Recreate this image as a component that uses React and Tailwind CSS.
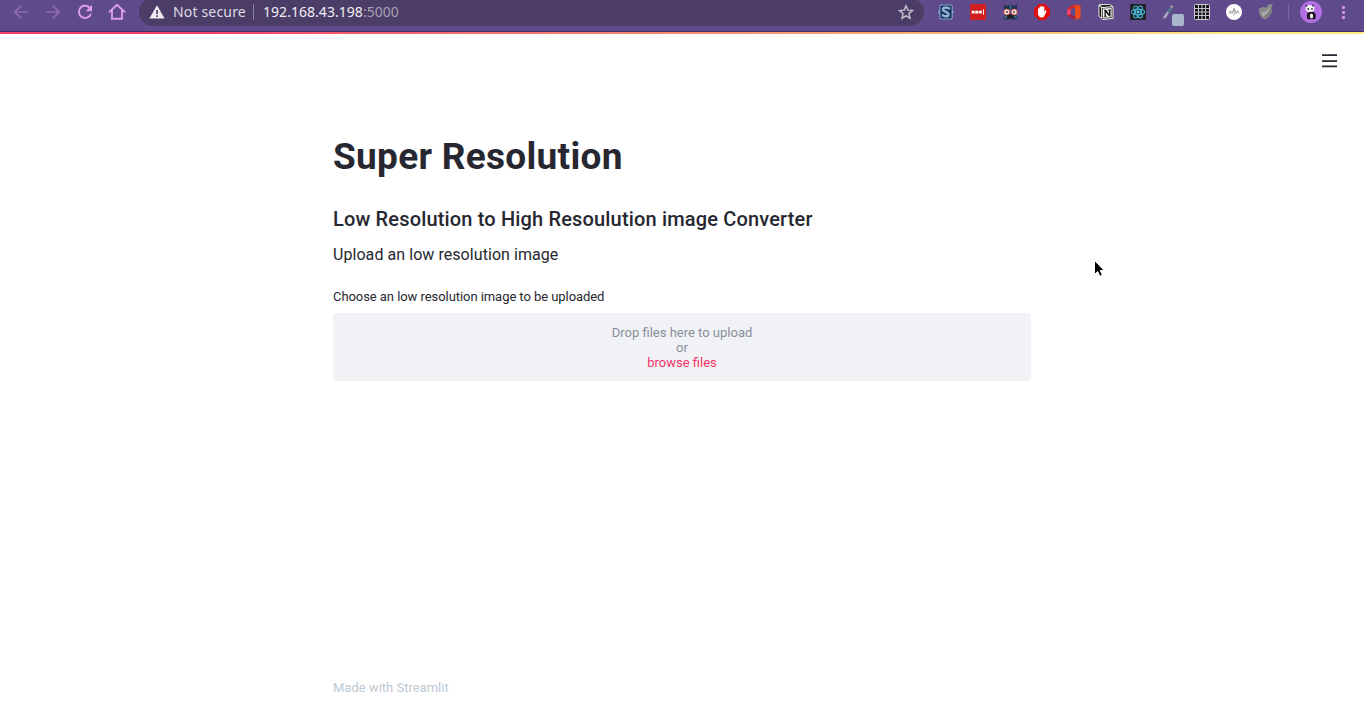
import React from "react";

function Slot({ children }) {
  return <div className="flex h-6 w-8 shrink-0 items-center justify-center">{children}</div>;
}

function Nav() {
  return (
    <>
      <Slot>
        <svg width="16" height="16" viewBox="0 0 16 16" fill="none" stroke="#936bb3" strokeWidth="1.7">
          <path d="M15 8H2M8.2 1.6 1.8 8l6.400 6.400" />
        </svg>
      </Slot>
      <Slot>
        <svg width="16" height="16" viewBox="0 0 16 16" fill="none" stroke="#936bb3" strokeWidth="1.7">
          <path d="M1 8h13M7.800 1.600 14.200 8l-6.400 6.400" />
        </svg>
      </Slot>
      <Slot>
        <svg width="16" height="16" viewBox="0 0 16 16" fill="none">
          <path d="M13.300 4.400A6.200 6.200 0 1 0 14 9.800" stroke="#dc9cf0" strokeWidth="2" />
          <path d="M15 .8v6.400H8.600z" fill="#dc9cf0" />
        </svg>
      </Slot>
      <Slot>
        <svg width="18" height="18" viewBox="0 0 18 18" fill="none" stroke="#dc9cf0" strokeWidth="1.900">
          <path d="M1 9.200 9 1.700l8 7.500M4 7v8.800h10V7" />
        </svg>
      </Slot>
    </>
  );
}

function AddressBar() {
  return (
    <div className="-mt-0.5 ml-1.5 flex h-7 w-[785px] shrink-0 items-center rounded-full bg-[#4c3d68] pl-2.5 pr-2.5 font-['Noto_Sans',sans-serif] text-[14px] leading-7 text-[#efedf2]">
      <svg width="16" height="14" viewBox="0 0 16 14">
        <path d="M8 .3 15.600 13.500H.4z" fill="#eeecef" />
        <path d="M7.200 5h1.700v4H7.200zM7.200 10.200h1.700v1.700H7.200z" fill="#4c3d68" />
      </svg>
      <span className="ml-2 w-[74px] whitespace-nowrap tracking-[0.17px] text-[#dfdbe4]">Not secure</span>
      <span className="ml-1.5 h-4 w-px bg-[#8d829e]" />
      <span className="ml-[9px] whitespace-nowrap tracking-[0.04px]">
        192.168.43.198<span className="text-[#a79fb4]">:5000</span>
      </span>
      <svg className="ml-auto" width="16" height="16" viewBox="0 0 16 16" fill="none" stroke="#c6c0cd" strokeWidth="1.400">
        <path d="m8 1.800 1.800 4.300 4.700.4-3.600 3.100 1.100 4.600L8 11.800l-4 2.400 1.100-4.600L1.500 6.500l4.700-.4z" />
      </svg>
    </div>
  );
}

function Extensions() {
  return (
    <div className="ml-1.5 flex shrink-0">
      <Slot>
        <svg width="16" height="16" viewBox="0 0 16 16">
          <path d="M2.500.5h11l1.200 1v4.700L16 8l-1.300 1.800v4.700l-1.200 1h-11l-1.200-1V9.800L0 8l1.300-1.800V1.500z" fill="#7fa3cc" />
          <path d="M3 1.500h10l.6.8V14l-.6.600H3l-.6-.6V2.300z" fill="#17345c" />
          <path d="M11 5.500V4.300q-3-1.500-5-.5-1.900 1.400-.3 2.900L9.800 9q1.500 1.600-.2 3-2 .8-4.600-.5v-1.200" fill="none" stroke="#92b1d6" strokeWidth="2.500" />
        </svg>
      </Slot>
      <Slot>
        <svg width="16" height="16" viewBox="0 0 16 16">
          <rect width="16" height="16" rx="1" fill="#d1211f" />
          <path d="M1.700 6.800h2.900v2.600H1.700zM5.300 6.800h2.900v2.600H5.300zM8.900 6.800h2.900v2.600H8.900z" fill="#fff" />
          <path d="M13.500 5.300v5.400" stroke="#fff" strokeWidth=".9" />
        </svg>
      </Slot>
      <Slot>
        <svg width="17" height="16" viewBox="0 0 17 16">
          <path d="M2.200 6 1.800.4 4.800 2Q8.500-.4 12.200 2l3-1.600-.4 6.100z" fill="#1c3550" />
          <path d="M8.500 1v5" stroke="#3d7792" strokeWidth="1.500" />
          <path d="M1 15.500Q1 12 4 11h9q3 1 3 4.500z" fill="#23354a" />
          <path d="M2 14.800Q2.500 12.500 5 12.500M15 14.800q-.5-2.300-3-2.300" stroke="#4b91b0" fill="none" />
          <path d="M5.500 10h6v4h-6z" fill="#201d27" />
          <circle cx="4.800" cy="8" r="2.900" fill="#fbe5de" stroke="#d86259" />
          <circle cx="12.200" cy="8" r="2.900" fill="#fbe5de" stroke="#d86259" />
          <circle cx="5" cy="8" r=".9" fill="#35242e" />
          <circle cx="12" cy="8" r=".9" fill="#35242e" />
        </svg>
      </Slot>
      <Slot>
        <svg width="16" height="16" viewBox="0 0 16 16">
          <path d="M4.700 0h6.600L16 4.700v6.600L11.300 16H4.700L0 11.300V4.700z" fill="#e01010" />
          <path d="M4 8.700V4.600q.8-.8 1.500 0V3q.8-.8 1.500 0v-.6q.9-.8 1.700 0V3q.9-.8 1.600 0v4.900l1-1.300q1.100-.3 1.300.5l-2 4.300Q9.800 13.500 8 13.500q-4 0-4-4.800" fill="#fff" />
        </svg>
      </Slot>
      <Slot>
        <svg width="14" height="16" viewBox="0 0 14 16">
          <path d="M8.200.3 13.600 2v12L8.200 15.700z" fill="#ed4b1c" />
          <path d="M8.200.3 1.700 3.200.3 6v5.500l3.200-1.300V5l4.700-1.300z" fill="#d92d24" />
          <path d="m3.500 10.200-3.200 1.300 1.700 1 6.200 3.200v-3z" fill="#b01d3c" />
          <path d="m.3 6 3.200-1v5.200L.3 11.500z" fill="#fa456e" />
        </svg>
      </Slot>
      <Slot>
        <svg width="16" height="16" viewBox="0 0 16 16">
          <path d="M1.500.3 11.800 0 15.500 2.800v12L5 16 .5 12V1.500z" fill="#f8f7f5" />
          <path d="m2 1.300 9.600-.6 2 1.500-9.500.7zM4.300 4l10.200-.7v10.600l-10.200.8zM1.400 2l1.800 1.600v10L1.400 11.700z" fill="#181718" />
          <path d="m5 4.600 8.700-.5v9.100l-8.700.7z" fill="#f8f7f5" />
          <path d="M5.700 5.800h2.500L11 9.700v-3l-.9-.3v-.9h3.100v.8l-.7.300v6h-1.300L7.800 8.300v3.400l1 .3v.8H5.800V12l.7-.3V6.900z" fill="#181718" />
        </svg>
      </Slot>
      <Slot>
        <svg width="16" height="16" viewBox="0 0 16 16">
          <path d="M0 0h16v16H0z" fill="#222326" />
          <g fill="none" stroke="#46b9dc" strokeWidth="1.100">
            <ellipse cx="8" cy="8" rx="6.600" ry="2.700" />
            <ellipse cx="8" cy="8" rx="6.600" ry="2.700" transform="rotate(60 8 8)" />
            <ellipse cx="8" cy="8" rx="6.600" ry="2.700" transform="rotate(120 8 8)" />
          </g>
          <circle cx="8" cy="8" r="1.400" fill="#61d8f5" />
        </svg>
      </Slot>
      <Slot>
        <svg className="shrink-0 overflow-visible" width="16" height="16" viewBox="0 0 16 16">
          <path d="m1 15 2.800-4.200 1.800 1z" fill="#d4cfda" />
          <path d="m2 13.800 4.500-6.300" stroke="#a9afc1" strokeWidth="2.200" />
          <path d="m6 8.300 3.500-5" stroke="#557b91" strokeWidth="2.800" />
          <path d="m9.300 3.500 1-1.700" stroke="#c8b396" strokeWidth="1.800" />
          <rect x="10" y="10" width="12" height="12" rx="2" fill="#a8b6ca" />
        </svg>
      </Slot>
      <Slot>
        <svg width="16" height="16" viewBox="0 0 16 16">
          <rect x=".5" y=".5" width="15" height="15" rx="1" fill="#151419" stroke="#d1ccd7" />
          <path d="M4.500 1v14M8 1v14M11.500 1v14M1 4.500h14M1 8h14M1 11.500h14" stroke="#c8c4cc" strokeWidth="1" />
        </svg>
      </Slot>
      <Slot>
        <svg width="16" height="16" viewBox="0 0 16 16">
          <circle cx="8" cy="8" r="8" fill="#fff" />
          <path d="M3 9.700 4.500 6.500 5.800 9.700 8 4.300l2.200 5.400 1.300-3.200L13 9.700M8 5v6.500" fill="none" stroke="#88858c" strokeWidth=".8" />
        </svg>
      </Slot>
      <Slot>
        <svg width="16" height="16" viewBox="0 0 16 16">
          <path d="M1 4.500 4.500 3l4 .5 1.500-3 5-.3-1.800 3.700 1 4-3 4.600-3.500 3-4-1.500L1 9z" fill="#8a8a8a" />
          <path d="m4.500 12.500 5.300-4L14 1.500 8.500 7.200 5.700 9.300 3.700 7z" fill="#b0b0b0" />
          <path d="m6 15 5.600-4 1.700-3.500-.3-2.500-2.500 4z" fill="#747474" />
        </svg>
      </Slot>
    </div>
  );
}

function BrowserBar() {
  return (
    <header className="flex h-8 shrink-0 items-start overflow-hidden border-b border-[#3e2e62] bg-[#5f4a8b] pl-[5px]">
      <Nav />
      <AddressBar />
      <Extensions />
      <span className="ml-1.5 mt-1 h-4 w-px shrink-0 bg-[#85639f]" />
      <svg className="ml-[11px] mt-px shrink-0" width="22" height="22" viewBox="0 0 22 22">
        <circle cx="11" cy="11" r="11" fill="#b46ee4" />
        <ellipse cx="11.300" cy="14.500" rx="4.400" ry="3.700" fill="#17151b" />
        <ellipse cx="11.500" cy="15" rx="1.700" ry="2.600" fill="#efecef" />
        <ellipse cx="10" cy="7.500" rx="4.400" ry="3.500" fill="#f4f1f4" />
        <circle cx="6.300" cy="4.800" r="1" fill="#3b3440" />
        <circle cx="12.800" cy="4.600" r="1" fill="#3b3440" />
        <circle cx="8.200" cy="8" r=".9" fill="#3b3440" />
        <circle cx="12" cy="7.800" r=".9" fill="#3b3440" />
        <path d="M7.500 15.500h2.500v2.700H7.500zM13 15.500h2.500v2.700H13z" fill="#17151b" />
      </svg>
      <svg className="ml-4 mt-1 shrink-0" width="11" height="16" viewBox="0 0 11 16" fill="#d795ea">
        <circle cx="5.500" cy="3.400" r="1.600" />
        <circle cx="5.500" cy="8.400" r="1.600" />
        <circle cx="5.500" cy="13.400" r="1.600" />
      </svg>
    </header>
  );
}

export default function App() {
  return (
    <div className="relative flex h-[705px] w-[1364px] flex-col overflow-hidden bg-white font-[Roboto,sans-serif] text-[#262730]">
      <BrowserBar />
      <div className="h-0.5 shrink-0 bg-linear-to-r from-[#f63d6c] from-15% via-[#fdac72] via-68% to-[#ffe980] to-90%" />
      <div className="flex h-[53px] shrink-0 items-center justify-end pr-[27px]">
        <svg width="15" height="14" viewBox="0 0 15 14" fill="#262730" role="img" aria-label="Menu">
          <path d="M0 .3h15V2H0zM0 6.200h15v1.700H0zM0 11.600h15v1.700H0z" />
        </svg>
      </div>
      <main className="mx-auto flex w-[698px] grow flex-col whitespace-nowrap">
        <h1 className="mt-[46px] text-[37px] font-bold leading-[48px] tracking-[0.29px]">Super Resolution</h1>
        <h2 className="mt-6 text-[20px] font-medium leading-7 tracking-[0.16px]">Low Resolution to High Resoulution image Converter</h2>
        <p className="mt-2.5 text-[16px] leading-6 tracking-[0.06px]">Upload an low resolution image</p>
        <p className="mt-5 text-[13px] leading-5 tracking-[-0.06px]">Choose an low resolution image to be uploaded</p>
        <div className="mt-1.5 flex h-[68px] flex-col items-center justify-center rounded bg-[#f0f2f6] text-[13px] leading-[15px] text-[#8a8e9b]">
          <span>Drop files here to upload</span>
          <span>or</span>
          <a className="text-[#f63366]">browse files</a>
        </div>
        <footer className="mb-[7px] mt-auto text-[13px] leading-5 text-[#bcc9d4]">Made with Streamlit</footer>
      </main>
      <svg className="absolute left-[1093px] top-[259px]" width="12" height="19" viewBox="0 0 12 19">
        <path d="M1.500 1.500v14l3.200-3 2.200 4.700 2.500-1.100-2.200-4.600h4z" fill="#000" stroke="#fff" strokeWidth="1" />
      </svg>
    </div>
  );
}
